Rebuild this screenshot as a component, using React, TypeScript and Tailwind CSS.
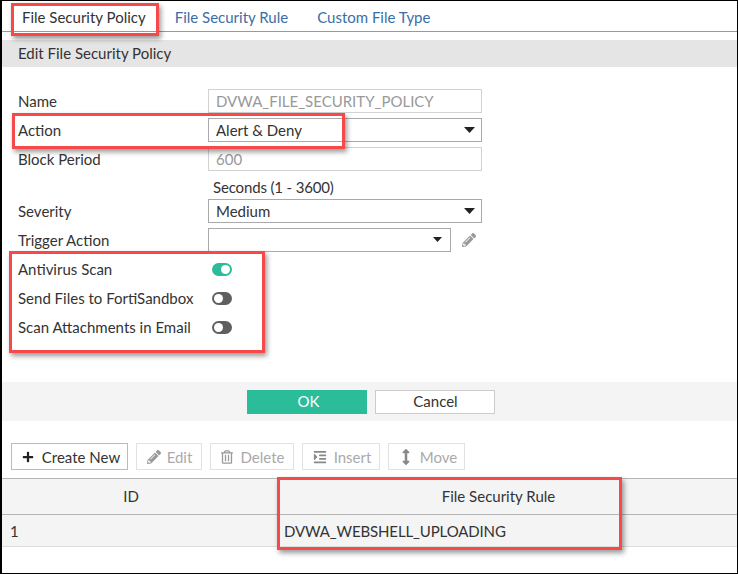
import { FaArrowsAltV, FaIndent, FaPencilAlt, FaPlus, FaRegTrashAlt } from 'react-icons/fa'
import type { ReactNode } from 'react'

function Caret({ small }: { small?: boolean }) {
  return (
    <svg
      className={`absolute top-[8px] ${small ? 'right-[8px] h-[5px] w-[9px]' : 'right-[6px] h-[6px] w-[11px]'}`}
      viewBox="0 0 11 6"
      preserveAspectRatio="none"
      aria-hidden
    >
      <path d="M0 0H11L5.5 6Z" fill="#222" />
    </svg>
  )
}

function Row({ label, children }: { label: string; children: ReactNode }) {
  return (
    <div className="flex h-[24px] items-center">
      <span className="w-[192px] shrink-0 pl-[2px] text-[#333]">{label}</span>
      {children}
    </div>
  )
}

function Select({ value, small }: { value: string; small?: boolean }) {
  return (
    <div
      className={`relative flex h-[24px] ${small ? 'w-[243px]' : 'w-[274px]'} items-center border border-[#aaa] bg-white pl-[7px] text-[#333]`}
    >
      {value}
      <Caret small={small} />
    </div>
  )
}

function Toggle({ on }: { on?: boolean }) {
  return (
    <span
      className={`ml-[4px] flex h-[13px] w-[20px] items-center rounded-full px-[2px] ${
        on ? 'justify-end bg-[#2bbd99]' : 'justify-start bg-[#5f5f5f]'
      }`}
    >
      <span className="h-[9px] w-[9px] rounded-full bg-white" />
    </span>
  )
}

function ToolButton({
  icon,
  label,
  className,
  active,
}: {
  icon: ReactNode
  label: string
  className: string
  active?: boolean
}) {
  return (
    <div
      className={`flex h-[27px] items-center justify-center pt-[1px] border ${className} ${
        active ? 'border-[#bbb] text-[#333]' : 'border-[#e2e2e2] text-[#aaa]'
      }`}
    >
      {icon}
      {label}
    </div>
  )
}

function Callout({ className }: { className: string }) {
  return (
    <div
      className={`pointer-events-none absolute border-[3px] border-[#f64a4a] shadow-[2px_3px_5px_rgba(0,0,0,0.4)] ${className}`}
      aria-hidden
    />
  )
}

export default function App() {
  return (
    <div className="relative h-[574px] w-[738px] overflow-hidden border border-l-[2px] border-black bg-white font-['Lato','Open_Sans',sans-serif] text-[15px] leading-none">
      <div className="flex h-[31px] items-center gap-[29px] border-b border-[#999] pt-[2px] pl-[20px] text-[#3a6ea5]">
        <span className="text-[#333]">File Security Policy</span>
        <span>File Security Rule</span>
        <span>Custom File Type</span>
      </div>

      <div className="mt-[8px] flex h-[27px] items-center bg-[#e5e5e5] pl-[16px] text-[#333]">
        Edit File Security Policy
      </div>

      <div className="mt-[22px] flex flex-col gap-[5px] pl-[14px]">
        <Row label="Name">
          <div className="flex h-[24px] w-[274px] items-center border border-[#d2d2d2] pl-[7px] text-[#999]">
            DVWA_FILE_SECURITY_POLICY
          </div>
        </Row>
        <Row label="Action">
          <Select value="Alert &amp; Deny" />
        </Row>
        <Row label="Block Period">
          <div className="flex h-[24px] w-[274px] items-center border border-[#d2d2d2] pl-[7px] text-[#999]">600</div>
        </Row>
        <div className="h-[18px] pt-[4px] pl-[197px] tracking-[-0.15px] text-[#333]">Seconds (1 - 3600)</div>
        <Row label="Severity">
          <Select value="Medium" />
        </Row>
        <Row label="Trigger Action">
          <Select value="" small />
          <FaPencilAlt className="ml-[11px] h-[14px] w-[14px] text-[#999]" />
        </Row>
        <Row label="Antivirus Scan">
          <Toggle on />
        </Row>
        <Row label="Send Files to FortiSandbox">
          <Toggle />
        </Row>
        <Row label="Scan Attachments in Email">
          <Toggle />
        </Row>
      </div>

      <div className="mt-[43px] flex h-[39px] items-center justify-center gap-[8px] bg-[#f4f4f4] pl-[2px]">
        <div className="flex h-[24px] w-[120px] items-center justify-center bg-[#2bbd99] pl-[4px] text-white">OK</div>
        <div className="flex h-[24px] w-[120px] items-center justify-center border border-[#ccc] bg-white pl-[2px] text-[#333]">
          Cancel
        </div>
      </div>

      <div className="mt-[22px] flex gap-[8px] pl-[9px]">
        <ToolButton
          active
          className="w-[117px] gap-[8px] pl-[3px]"
          label="Create New"
          icon={<FaPlus className="h-[12px] w-[12px] text-[#222]" />}
        />
        <ToolButton
          className="w-[66px] gap-[6px] pl-[1px]"
          label="Edit"
          icon={<FaPencilAlt className="h-[14px] w-[14px] text-[#999]" />}
        />
        <ToolButton
          className="w-[84px] gap-[8px] pl-[1px]"
          label="Delete"
          icon={<FaRegTrashAlt className="h-[14px] w-[12px] text-[#999]" />}
        />
        <ToolButton
          className="w-[78px] gap-[6px] pl-[1px]"
          label="Insert"
          icon={<FaIndent className="h-[14px] w-[16px] text-[#888]" />}
        />
        <ToolButton
          className="w-[77px] gap-[10px] pl-[6px]"
          label="Move"
          icon={<FaArrowsAltV className="h-[16px] w-[8px] text-[#888]" />}
        />
      </div>

      <div className="mt-[8px] text-[#333]">
        <div className="flex h-[37px] items-center border-y border-[#b5b5b5] bg-[#f4f4f4]">
          <span className="w-[258px] text-center">ID</span>
          <span className="flex-1 text-center">File Security Rule</span>
        </div>
        <div className="flex h-[32px] items-center border-b border-[#ddd] bg-[#f4f4f4] pt-[1px]">
          <span className="w-[282px] pl-[8px]">1</span>
          <span className="tracking-[-0.13px]">DVWA_WEBSHELL_UPLOADING</span>
        </div>
      </div>

      <Callout className="top-[2px] left-[9px] h-[33px] w-[148px]" />
      <Callout className="top-[112px] left-[10px] h-[36px] w-[333px]" />
      <Callout className="top-[250px] left-[7px] h-[102px] w-[256px]" />
      <Callout className="top-[476px] left-[275px] h-[73px] w-[345px]" />
    </div>
  )
}
